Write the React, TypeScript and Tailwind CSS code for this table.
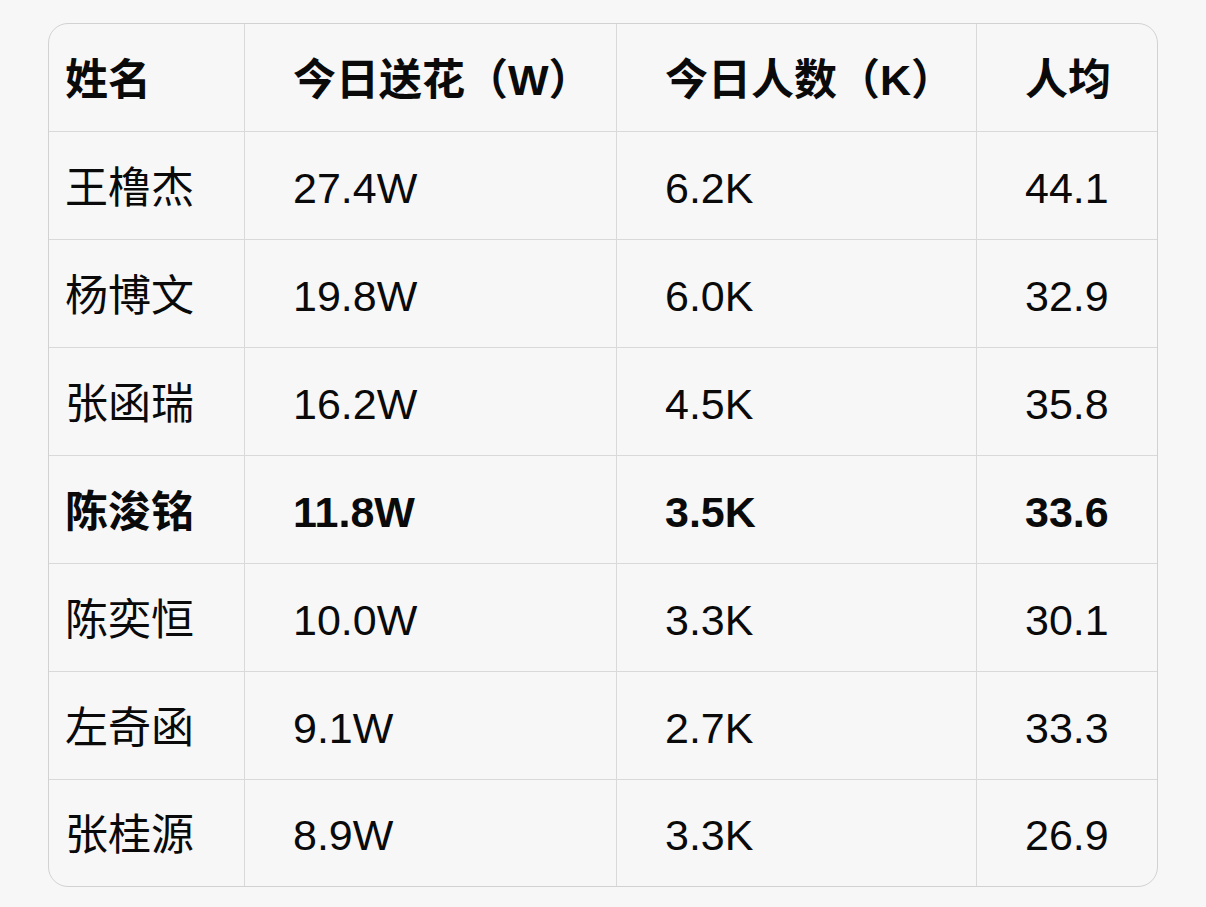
import React from "react";

const rows: [string, string, string, string, boolean][] = [
  ["王橹杰", "27.4W", "6.2K", "44.1", false],
  ["杨博文", "19.8W", "6.0K", "32.9", false],
  ["张函瑞", "16.2W", "4.5K", "35.8", false],
  ["陈浚铭", "11.8W", "3.5K", "33.6", true],
  ["陈奕恒", "10.0W", "3.3K", "30.1", false],
  ["左奇函", "9.1W", "2.7K", "33.3", false],
  ["张桂源", "8.9W", "3.3K", "26.9", false],
];

const header = ["姓名", "今日送花（W）", "今日人数（K）", "人均"];

export default function App() {
  const font = { fontFamily: '"Liberation Sans", "Noto Sans CJK SC", sans-serif' };
  const cellBase = "flex items-center pt-[5px] text-[43px] leading-none text-[#0a0a0a] border-[#d9d9d9]";
  const pad = (c: number) => (c === 0 ? "pl-4" : "pl-[48px]");
  return (
    <div className="min-h-screen w-full bg-[#f7f7f7]" style={font}>
      <div className="pt-[23px] pl-[48px]">
        <div className="w-[1110px] rounded-[20px] border border-[#d2d2d2] overflow-hidden bg-[#f7f7f7]">
          <div className="grid grid-cols-[196px_372px_360px_180px] grid-rows-[repeat(7,108px)_106px]">
            {header.map((h, c) => (
              <div
                key={"h" + c}
                className={`${cellBase} ${pad(c)} font-semibold border-b ${c < 3 ? "border-r" : ""}`}
              >
                {h}
              </div>
            ))}
            {rows.map((r, ri) =>
              r.slice(0, 4).map((v, c) => (
                <div
                  key={ri + "-" + c}
                  className={`${cellBase} ${pad(c)} ${r[4] ? "font-bold" : "font-normal"} ${
                    ri < rows.length - 1 ? "border-b" : ""
                  } ${c < 3 ? "border-r" : ""}`}
                >
                  {v as string}
                </div>
              ))
            )}
          </div>
        </div>
      </div>
    </div>
  );
}
